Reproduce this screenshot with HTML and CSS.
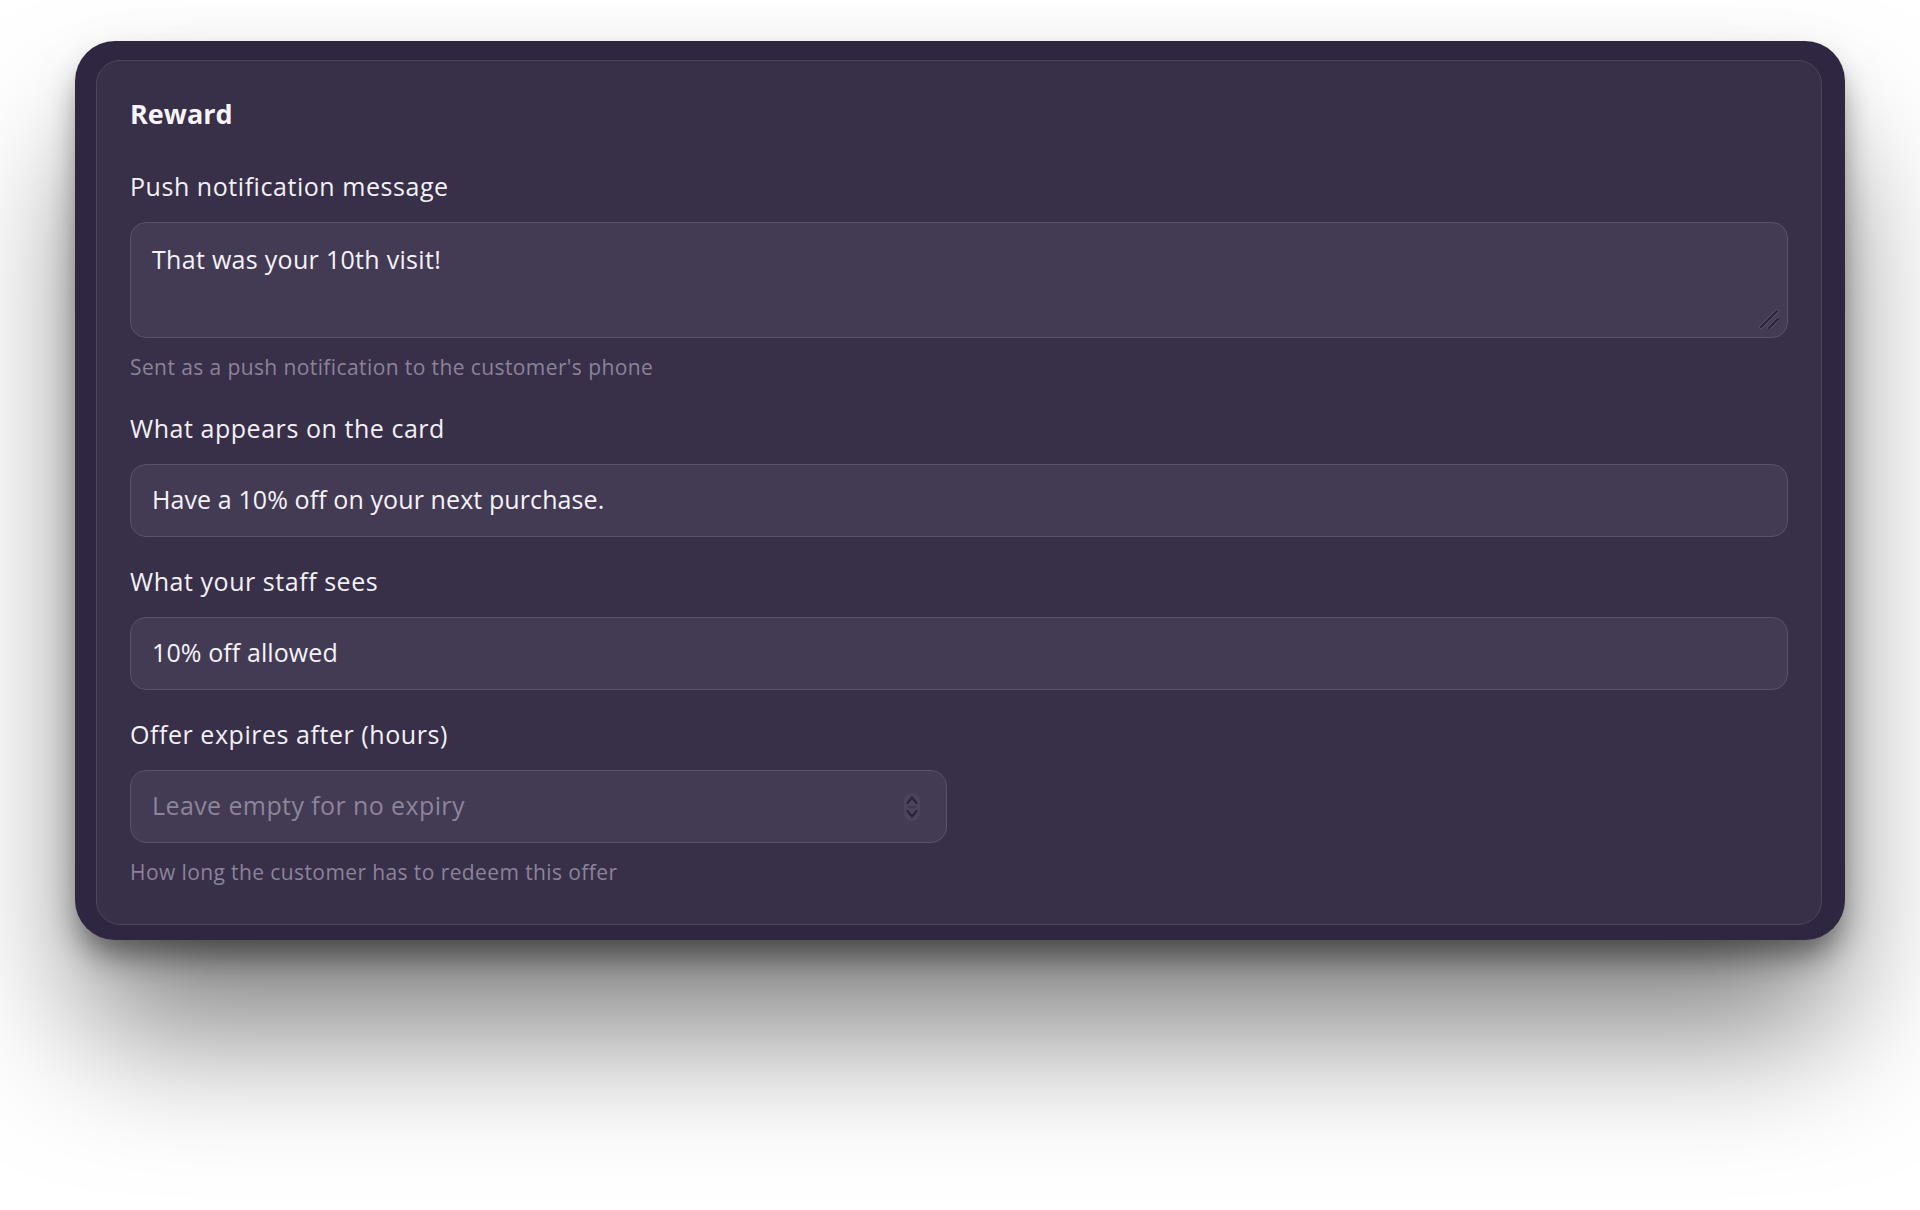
FILE: index.html
```html
<!DOCTYPE html>
<html lang="en">
<head>
<meta charset="utf-8">
<title>Reward</title>
<link rel="stylesheet" href="styles.css">
</head>
<body>
<div class="page">
  <div class="shell">
    <section class="panel">
      <h2 class="panel-title">Reward</h2>

      <div class="field">
        <label class="field-label" for="push">Push notification message</label>
        <div class="area-wrap">
          <textarea id="push" class="control control-area">That was your 10th visit!</textarea>
          <svg class="resizer" width="20" height="20" viewBox="0 0 20 20" aria-hidden="true">
            <g stroke="#6a6080" stroke-width="4" stroke-linecap="round" opacity="0.55">
              <line x1="2" y1="18" x2="18" y2="2"/>
              <line x1="10" y1="19" x2="19" y2="10"/>
            </g>
            <g stroke="#2a2237" stroke-width="2.2" stroke-linecap="round">
              <line x1="2" y1="18" x2="18" y2="2"/>
              <line x1="10" y1="19" x2="19" y2="10"/>
            </g>
          </svg>
        </div>
        <p class="field-hint">Sent as a push notification to the customer's phone</p>
      </div>

      <div class="field">
        <label class="field-label" for="card">What appears on the card</label>
        <input id="card" class="control" type="text" value="Have a 10% off on your next purchase.">
      </div>

      <div class="field">
        <label class="field-label" for="staff">What your staff sees</label>
        <input id="staff" class="control" type="text" value="10% off allowed">
      </div>

      <div class="field">
        <label class="field-label" for="expiry">Offer expires after (hours)</label>
        <div class="control control-number">
          <input id="expiry" class="number-input" type="text" placeholder="Leave empty for no expiry">
          <svg class="spinner" width="18" height="30" viewBox="0 0 18 30" aria-hidden="true">
            <rect x="1" y="1" width="16" height="28" rx="8" fill="rgba(255,255,255,0.05)"/>
            <path d="M4.5 11 L9 5.5 L13.5 11" fill="none" stroke="#2b2338" stroke-width="2.2" stroke-linecap="round" stroke-linejoin="round"/>
            <line x1="4" y1="15" x2="14" y2="15" stroke="#2b2338" stroke-width="1" opacity="0.6"/>
            <path d="M4.5 19 L9 24.5 L13.5 19" fill="none" stroke="#2b2338" stroke-width="2.2" stroke-linecap="round" stroke-linejoin="round"/>
          </svg>
        </div>
        <p class="field-hint">How long the customer has to redeem this offer</p>
      </div>
    </section>
  </div>
</div>
</body>
</html>
```

FILE: styles.css
```css
* { box-sizing: border-box; }

html, body {
  margin: 0;
  background: #ffffff;
}

body {
  font-family: "Open Sans", "Noto Sans", sans-serif;
  color: #f3f1f6;
}

.page {
  padding: 41px 75px 0;
  height: 1210px;
}

.shell {
  background: #2f2741;
  border-radius: 40px;
  padding: 19px 23px 15px 21px;
  box-shadow:
    0 20px 30px -5px rgba(0, 0, 0, 0.45),
    0 100px 140px -10px rgba(0, 0, 0, 0.5),
    0 10px 60px rgba(0, 0, 0, 0.06);
}

.panel {
  background: #382f49;
  border: 1px solid #4d4460;
  border-radius: 24px;
  padding: 34px 33px 35px;
  display: flex;
  flex-direction: column;
  gap: 28px;
}

.panel-title {
  margin: 0 0 9px;
  font-size: 27px;
  line-height: 38px;
  font-weight: 700;
  color: #f7f5fa;
}

.field {
  display: flex;
  flex-direction: column;
}

.field-label {
  font-size: 25px;
  line-height: 33px;
  letter-spacing: 0.55px;
  margin-bottom: 19px;
  color: #f3f1f6;
}

.area-wrap {
  position: relative;
}

.resizer {
  position: absolute;
  right: 9px;
  bottom: 9px;
  pointer-events: none;
}

.control {
  display: block;
  width: 100%;
  height: 73px;
  background: #433a54;
  border: 1px solid #5a516c;
  border-radius: 16px;
  padding: 0 21px 3px;
  font-family: inherit;
  font-size: 25px;
  letter-spacing: 0.1px;
  color: #f5f3f8;
  outline: none;
}

.control-area {
  height: 116px;
  padding: 18px 21px;
  line-height: 36px;
  letter-spacing: 0.3px;
  resize: none;
}

.control-number {
  width: 817px;
  display: flex;
  align-items: center;
  gap: 10px;
  padding: 0 21px;
}

.number-input {
  flex: 1;
  min-width: 0;
  background: transparent;
  border: 0;
  outline: none;
  padding: 0 0 3px;
  font-family: inherit;
  font-size: 25px;
  letter-spacing: 0.4px;
  color: #f5f3f8;
}

.number-input::placeholder {
  color: #8c859b;
}

.spinner {
  margin-right: 4px;
  flex: none;
}

.field-hint {
  margin: 16px 0 3px;
  font-size: 21px;
  line-height: 27px;
  letter-spacing: 0.4px;
  color: #8b8499;
}
```
